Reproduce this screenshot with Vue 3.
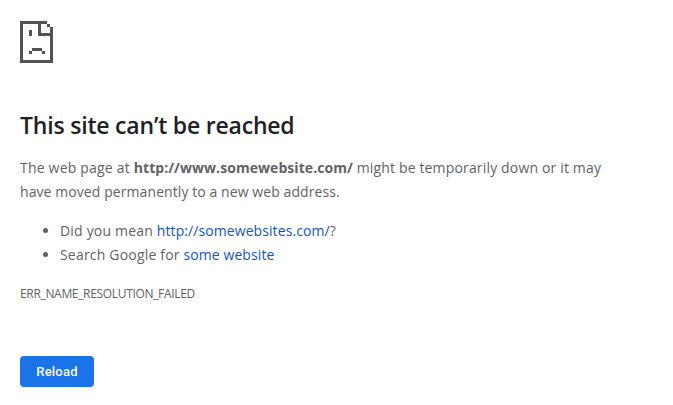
<script setup>
const suggestions = [
  { lead: 'Did you mean ', link: 'http://somewebsites.com/', tail: '?' },
  { lead: 'Search Google for ', link: 'some website', tail: '' },
]
</script>

<template>
  <main class="page">
    <svg class="icon" width="33" height="42" viewBox="0 0 33 42" shape-rendering="crispEdges" aria-hidden="true">
      <path d="M0 0H27V3H30V6H33V42H0ZM3 3V39H30V15H18V3ZM21 3V12H30V6H27V3Z" fill-rule="evenodd" />
      <path d="M9 9h3v6H9zM12 27h10v3H12zM9 30h3v3H9zM22 30h3v3h-3z" />
    </svg>
    <h1>This site can’t be reached</h1>
    <p class="summary">
      <span class="intro">The web page at </span><strong>http://www.somewebsite.com/</strong><span class="status"> might be temporarily down or it may</span><br />
      <span>have moved permanently to a new web address.</span>
    </p>
    <ul>
      <li v-for="s in suggestions" :key="s.link"><span class="lead">{{ s.lead }}</span><a>{{ s.link }}</a>{{ s.tail }}</li>
    </ul>
    <div class="code">ERR_NAME_RESOLUTION_FAILED</div>
    <button type="button">Reload</button>
  </main>
</template>

<style>
body { background: #fff; }
</style>

<style scoped>
.page {
  box-sizing: border-box;
  width: 673px;
  height: 405px;
  padding: 21px 20px 0;
  overflow: hidden;
  background: #fff;
  color: #5f6368;
  font-family: "Open Sans", "Noto Sans", sans-serif;
  font-size: 14px;
  line-height: 24px;
  letter-spacing: 0.08px;
  white-space: nowrap;
}
.icon { display: block; fill: #535353; }
h1 {
  margin: 47px 0 0;
  color: #202124;
  font-size: 23px;
  font-weight: 600;
  line-height: 30px;
  letter-spacing: -0.2px;
}
.summary { margin: 16px 0 0; }
.intro { letter-spacing: 0.2px; }
.status { letter-spacing: 0.16px; }
strong { font-weight: 700; letter-spacing: 0.06px; }
ul { margin: 15px 0 0; padding: 0 0 0 40px; }
.lead { letter-spacing: 0.19px; }
a { color: #1155cc; }
.code { margin-top: 15px; font-size: 12px; letter-spacing: -0.33px; }
button {
  display: block;
  width: 74px;
  height: 31px;
  margin: 50px 0 0;
  padding: 0;
  border: 0;
  border-radius: 4px;
  background: #1a73e8;
  color: #fff;
  font: 500 13px/31px Roboto, sans-serif;
  letter-spacing: 0.2px;
}
</style>
